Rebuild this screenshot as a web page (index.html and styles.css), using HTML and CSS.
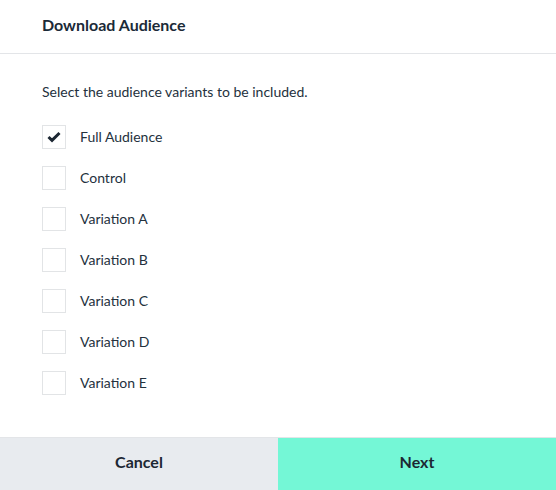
FILE: index.html
```html
<!DOCTYPE html>
<html>
<head>
<meta charset="utf-8">
<link rel="stylesheet" href="styles.css">
</head>
<body>
<div class="modal">
  <div class="header"><h1 class="title">Download Audience</h1></div>
  <div class="body">
    <p class="intro">Select the audience variants to be included.</p>
    <ul class="options">
      <li class="option"><span class="box checked"><svg width="14" height="12" viewBox="0 0 14 12"><path d="M1.5 6 L5 9.3 L12.5 2" fill="none" stroke="#1c2733" stroke-width="3"/></svg></span><span class="label">Full Audience</span></li>
      <li class="option"><span class="box"></span><span class="label">Control</span></li>
      <li class="option"><span class="box"></span><span class="label">Variation A</span></li>
      <li class="option"><span class="box"></span><span class="label">Variation B</span></li>
      <li class="option"><span class="box"></span><span class="label">Variation C</span></li>
      <li class="option"><span class="box"></span><span class="label">Variation D</span></li>
      <li class="option"><span class="box"></span><span class="label">Variation E</span></li>
    </ul>
  </div>
  <div class="footer">
    <button class="btn cancel">Cancel</button>
    <button class="btn next">Next</button>
  </div>
</div>
</body>
</html>
```
FILE: styles.css
```css
html, body { margin: 0; padding: 0; background: #fff; }
body { font-family: Lato, "Noto Sans", sans-serif; color: #1f2b38; }
.modal { width: 556px; height: 490px; display: flex; flex-direction: column; }
.header { height: 53px; border-bottom: 1px solid #e3e5e8; padding: 0 42px 5px; box-sizing: border-box; height: 54px; display: flex; align-items: center; }
.title { margin: 0; font-size: 16px; font-weight: 700; color: #1b2a38; }
.body { flex: 1; padding: 29px 42px 0; }
.intro { margin: 0 0 25px; font-size: 14px; line-height: 17px; color: #24313d; }
.options { list-style: none; margin: 0; padding: 0; display: flex; flex-direction: column; gap: 17px; }
.option { display: flex; align-items: center; height: 24px; }
.box { width: 24px; height: 24px; box-sizing: border-box; border: 1px solid #e2e4e6; display: flex; align-items: center; justify-content: center; margin-right: 14px; }
.label { font-size: 14px; color: #24313d; position: relative; top: -1px; }
.footer { display: flex; height: 52px; border-top: 1px solid #e3e5e8; }
.btn { flex: 1; border: 0; margin: 0; padding: 0 0 5px; font-family: inherit; font-size: 16px; font-weight: 700; color: #1c2733; cursor: pointer; }
.cancel { background: #e8ebef; }
.next { background: #74f7d6; }
```
